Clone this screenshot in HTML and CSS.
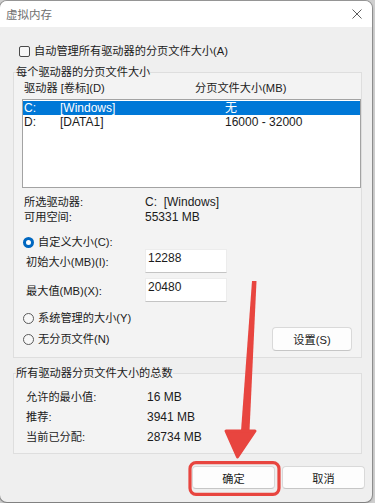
FILE: index.html
```html
<!DOCTYPE html>
<html lang="zh-CN">
<head>
    <meta charset="UTF-8">
    <meta name="viewport" content="width=device-width, initial-scale=1.0">
    <title>虚拟内存</title>
    <link rel="stylesheet" href="styles.css">
</head>
<body>
    <div class="window">
        <div class="titlebar">
            <span class="title">虚拟内存</span>
            <svg class="close" width="10" height="10" viewBox="0 0 10 10">
                <path d="M0.5 0.5 L9.5 9.5 M9.5 0.5 L0.5 9.5" stroke="#5c5c5c" stroke-width="1" fill="none"/>
            </svg>
        </div>

        <div class="content">
            <div class="check-row"><span class="checkbox"></span>自动管理所有驱动器的分页文件大小(A)</div>

            <fieldset class="group drives">
                <legend>每个驱动器的分页文件大小</legend>
                <div class="list-head"><span>驱动器 [卷标](D)</span><span>分页文件大小(MB)</span></div>
                <div class="listbox">
                    <div class="list-row selected"><span>C:</span><span>[Windows]</span><span>无</span></div>
                    <div class="list-row"><span>D:</span><span>[DATA1]</span><span>16000 - 32000</span></div>
                </div>

                <div class="info">
                    <span>所选驱动器:</span><span class="num">C:&nbsp; [Windows]</span>
                    <span>可用空间:</span><span class="num">55331 MB</span>
                </div>

                <div class="radio-row first"><span class="radio on"></span>自定义大小(C):</div>
                <div class="size-row"><span>初始大小(MB)(I):</span><div class="textbox">12288</div></div>
                <div class="size-row second"><span>最大值(MB)(X):</span><div class="textbox">20480</div></div>

                <div class="radio-row system"><span class="radio"></span>系统管理的大小(Y)</div>
                <div class="nofile-row">
                    <div class="radio-row"><span class="radio"></span>无分页文件(N)</div>
                    <button class="btn set">设置(S)</button>
                </div>
            </fieldset>

            <fieldset class="group totals">
                <legend>所有驱动器分页文件大小的总数</legend>
                <div class="totals-grid">
                    <span>允许的最小值:</span><span class="num">16 MB</span>
                    <span>推荐:</span><span class="num">3941 MB</span>
                    <span>当前已分配:</span><span class="num">28734 MB</span>
                </div>
            </fieldset>

            <div class="actions">
                <button class="btn">确定</button>
                <button class="btn">取消</button>
            </div>
        </div>
    </div>

    <!-- 标注：红色箭头和方框 -->
    <svg class="annotation" width="375" height="503" viewBox="0 0 375 503">
        <polygon points="252,281 256.5,281 249.5,431 241,431" fill="#e8453f"/>
        <path d="M226 431 L255 431 L237.5 457 Z" fill="#e8453f" stroke="#e8453f" stroke-width="3" stroke-linejoin="round"/>
        <rect x="190" y="462.7" width="89" height="31.6" rx="6" fill="none" stroke="#e8453f" stroke-width="3.2"/>
    </svg>
</body>
</html>
```

FILE: styles.css
```css
body {
    margin: 0;
    width: 375px;
    height: 503px;
    overflow: hidden;
    background: #cfcfcf;
    font-family: "Liberation Sans", "Noto Sans CJK SC", sans-serif;
    font-size: 11.2px;
    color: #1b1b1b;
    position: relative;
}
.window {
    width: 372px;
    height: 501px;
    margin-top: 1px;
    background: #efefef;
    border-radius: 7px;
    overflow: hidden;
    box-shadow: 0 0 0 1px rgba(0,0,0,0.25), 0 1px 3px rgba(0,0,0,0.25);
}
.titlebar {
    height: 26px;
    background: #fff;
    display: flex;
    align-items: center;
    justify-content: space-between;
    padding: 0 10px 0 6px;
}
.title {
    font-size: 11.5px;
    color: #707070;
}
.close {
    display: block;
    margin-top: -1px;
}
.content {
    padding: 0 10px 0 13px;
    display: flex;
    flex-direction: column;
}
.check-row {
    margin-top: 17px;
    line-height: 14px;
    display: flex;
    align-items: center;
    padding-left: 6px;
    gap: 4px;
}
.checkbox {
    width: 11px;
    height: 11px;
    box-sizing: border-box;
    border: 1px solid #4a4a4a;
    border-radius: 2px;
    background: #f7f7f7;
}
.group {
    margin: 0;
    padding: 0 0 6px 2px;
    border: 1px solid #dedede;
    background: #f3f3f3;
    min-width: 0;
}
.group legend {
    padding: 0;
    line-height: 14px;
}
.drives {
    margin-top: 7px;
}
.list-head {
    margin: 2px 0 0 8px;
    line-height: 14px;
    display: grid;
    grid-template-columns: 171px 1fr;
}
.listbox {
    margin: 4px 0 0 6px;
    height: 89px;
    box-sizing: border-box;
    border: 1px solid #a3a3a3;
    background: #fff;
    padding-top: 1px;
}
.list-row {
    display: grid;
    grid-template-columns: 36px 165px 1fr;
    padding-left: 1px;
    height: 14px;
    line-height: 14px;
    font-size: 12px;
}
.list-row.selected {
    background: #0078d7;
    color: #fff;
}
.num {
    font-size: 12px;
}
.info {
    margin: 6.5px 0 0 8px;
    display: grid;
    grid-template-columns: 121px 1fr;
    line-height: 15px;
}
.radio-row {
    display: flex;
    align-items: center;
    gap: 4px;
    line-height: 14px;
    margin-left: 7px;
}
.radio-row.first {
    margin-top: 10.5px;
}
.radio-row.system {
    margin-top: 9px;
}
.radio {
    width: 11px;
    height: 11px;
    box-sizing: border-box;
    border: 1px solid #5a5a5a;
    border-radius: 50%;
    background: #f7f7f7;
}
.radio.on {
    border: 3.5px solid #0067c0;
    background: #fff;
}
.size-row {
    margin-left: 10px;
    display: grid;
    grid-template-columns: 119px 82px;
    align-items: center;
    height: 24px;
}
.size-row.second {
    margin-top: 5px;
}
.textbox {
    height: 24px;
    box-sizing: border-box;
    background: #fff;
    border: 1px solid #ececec;
    border-bottom-color: #c4c4c4;
    padding: 1px 2px 0;
    font-size: 12px;
    line-height: 14px;
}
.nofile-row {
    margin-top: 2px;
    display: flex;
    align-items: center;
    justify-content: space-between;
    padding-right: 9px;
}
.btn {
    height: 23px;
    box-sizing: border-box;
    background: #fdfdfd;
    border: 1px solid #d9d9d9;
    border-bottom-color: #c6c6c6;
    border-radius: 4px;
    font-family: inherit;
    font-size: 11.2px;
    color: #1b1b1b;
    padding: 0;
}
.btn.set {
    width: 80px;
    height: 24px;
}
.totals {
    margin-top: 8px;
}
.totals-grid {
    margin: 7px 0 0 10px;
    display: grid;
    grid-template-columns: 121px 1fr;
    line-height: 20px;
}
.actions {
    margin: 12px -3px 0 0;
    display: flex;
    justify-content: flex-end;
    gap: 7px;
}
.actions .btn {
    width: 83px;
}
.annotation {
    position: absolute;
    top: 0;
    left: 0;
    pointer-events: none;
}
```
